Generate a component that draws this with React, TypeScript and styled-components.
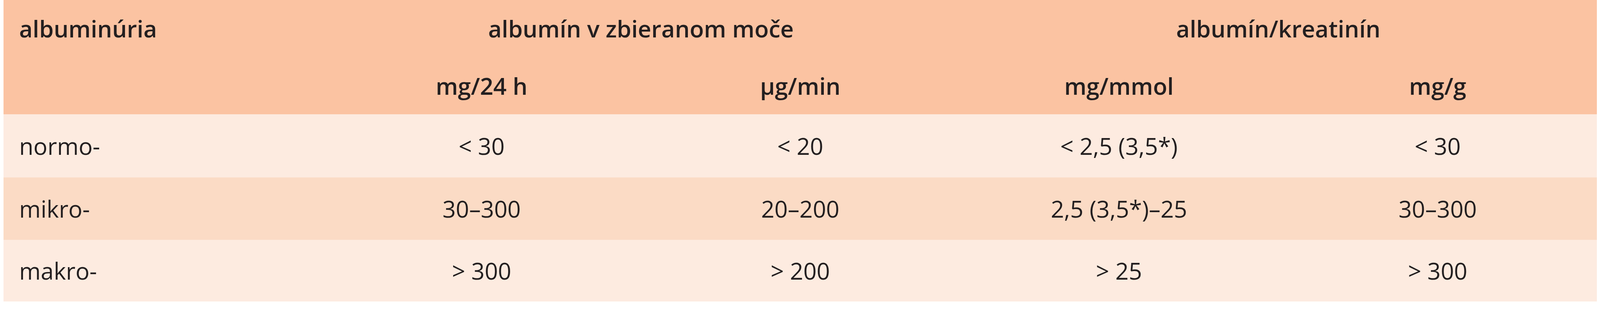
import React from "react";
import styled, { createGlobalStyle } from "styled-components";

// The table is laid out for a 5349px-wide window; horizontal sizes are in vw
// so the proportions hold when the window is narrower.

const GlobalStyle = createGlobalStyle`
  html, body {
    margin: 0;
    padding: 0;
    background: #fff;
  }
  body {
    font-family: "Open Sans", "Noto Sans", "Liberation Sans", sans-serif;
    color: #231f20;
  }
`;

type Row = {
  label: string;
  shade: "light" | "mid";
  height: number;
  values: string[];
};

const rows: Row[] = [
  { label: "normo-", shade: "light", height: 162, values: ["< 30", "< 20", "< 2,5 (3,5*)", "< 30"] },
  { label: "mikro-", shade: "mid", height: 160, values: ["30–300", "20–200", "2,5 (3,5*)–25", "30–300"] },
  { label: "makro-", shade: "light", height: 158, values: ["> 300", "> 200", "> 25", "> 300"] },
];

const units = ["mg/24 h", "µg/min", "mg/mmol", "mg/g"];

const App = (): JSX.Element => (
  <>
    <GlobalStyle />
    <Table>
      <colgroup>
        {[0, 1, 2, 3, 4].map((i) => (
          <Col key={i} />
        ))}
      </colgroup>
      <thead>
        <HeadRow $height={146}>
          <HeadCell $first>albuminúria</HeadCell>
          <HeadCell colSpan={2}>albumín v zbieranom moče</HeadCell>
          <HeadCell colSpan={2}>albumín/kreatinín</HeadCell>
        </HeadRow>
        <HeadRow $height={147}>
          <HeadCell $first />
          {units.map((unit) => (
            <HeadCell key={unit}>{unit}</HeadCell>
          ))}
        </HeadRow>
      </thead>
      <tbody>
        {rows.map((row) => (
          <BodyRow key={row.label} $shade={row.shade} $height={row.height}>
            <BodyCell $first>{row.label}</BodyCell>
            {row.values.map((value, j) => (
              <BodyCell key={j}>{value}</BodyCell>
            ))}
          </BodyRow>
        ))}
      </tbody>
    </Table>
  </>
);

const Table = styled.table`
  width: calc(100% - 0.41vw);
  margin-left: 0.224vw;
  table-layout: fixed;
  border-collapse: collapse;
  border-spacing: 0;
  font-size: 1.458vw;
`;

const Col = styled.col`
  width: 20%;
`;

const HeadRow = styled.tr<{ $height: number }>`
  height: ${(p) => p.$height}px;
  background: #fbc3a2;
`;

const BodyRow = styled.tr<{ $shade: "light" | "mid"; $height: number }>`
  height: ${(p) => p.$height}px;
  background: ${(p) => (p.$shade === "mid" ? "#fbdbc5" : "#fdebe0")};
`;

const HeadCell = styled.th<{ $first?: boolean }>`
  padding: 0 0 0 ${(p) => (p.$first ? "0.972vw" : "0")};
  text-align: ${(p) => (p.$first ? "left" : "center")};
  vertical-align: middle;
  font-weight: 600;
  white-space: nowrap;
  line-height: 1.36;
`;

const BodyCell = styled.td<{ $first?: boolean }>`
  padding: 0 0 0 ${(p) => (p.$first ? "0.972vw" : "0")};
  text-align: ${(p) => (p.$first ? "left" : "center")};
  vertical-align: middle;
  font-weight: 400;
  white-space: nowrap;
  line-height: 1.36;
`;

export default App;
